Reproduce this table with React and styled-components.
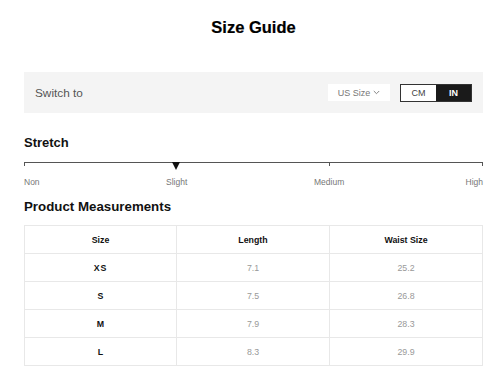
import React from 'react';
import styled, { createGlobalStyle } from 'styled-components';

const GlobalStyle = createGlobalStyle`
  body {
    margin: 0;
    background: #fff;
    font-family: "Liberation Sans", Arial, sans-serif;
  }
`;

const Page = styled.div`
  width: 459px;
  padding: 0 17px 0 24px;
`;

const Title = styled.h1`
  margin: 0;
  padding-top: 17px;
  height: 54px;
  box-sizing: border-box;
  line-height: 20px;
  font-size: 16.5px;
  font-weight: 700;
  color: #000;
  text-align: center;
  -webkit-text-stroke: 0.2px #000;
`;

const SwitchBar = styled.div`
  margin-top: 18px;
  height: 41px;
  background: #f4f4f4;
  display: flex;
  align-items: center;
  padding: 0 11px;
`;

const SwitchLabel = styled.span`
  flex: 1;
  font-size: 11.8px;
  color: #555;
`;

const Dropdown = styled.div`
  width: 62px;
  height: 17px;
  background: #fff;
  display: flex;
  align-items: center;
  justify-content: center;
  gap: 3px;
  font-size: 9px;
  color: #777;
  margin-right: 10px;
`;

const Toggle = styled.div`
  display: flex;
  border: 1px solid #333;
  height: 16px;
`;

const ToggleOption = styled.div`
  width: 35px;
  display: flex;
  align-items: center;
  justify-content: center;
  font-size: 9px;
  font-weight: ${p => (p.active ? 700 : 400)};
  background: ${p => (p.active ? '#1a1a1a' : '#fff')};
  color: ${p => (p.active ? '#fff' : '#444')};
`;

const Heading = styled.h2`
  margin: 0;
  font-size: ${p => p.size || 13}px;
  line-height: 16px;
  font-weight: 700;
  color: #111;
  margin-top: ${p => p.top}px;
`;

const Scale = styled.div`
  position: relative;
  margin-top: 11px;
  height: 4px;
  border-top: 1px solid #555;
`;

const Tick = styled.span`
  position: absolute;
  top: -1px;
  left: ${p => p.left};
  width: 1px;
  height: 4px;
  background: #555;
`;

const Marker = styled.span`
  position: absolute;
  top: -1px;
  left: 148px;
  width: 0;
  height: 0;
  border-left: 4.5px solid transparent;
  border-right: 4.5px solid transparent;
  border-top: 8px solid #111;
`;

const ScaleLabels = styled.div`
  display: flex;
  margin-top: 10px;
  font-size: 8.5px;
  line-height: 11px;
  color: #777;
`;

const ScaleLabel = styled.span`
  width: ${p => p.w}px;
  text-align: ${p => p.align || 'left'};
`;

const Table = styled.div`
  margin-top: 10px;
  display: grid;
  grid-template-columns: 152px 153px 1fr;
  border: 1px solid #e8e8e8;
  border-right: none;
  border-bottom: none;
`;

const Cell = styled.div`
  height: 27px;
  display: flex;
  align-items: center;
  justify-content: center;
  border-right: 1px solid #e8e8e8;
  border-bottom: 1px solid #e8e8e8;
  font-size: 8.8px;
  font-weight: ${p => (p.bold ? 700 : 400)};
  color: ${p => (p.bold ? '#111' : '#999')};
  letter-spacing: ${p => (p.spaced ? '1px' : '0')};
`;

const rows = [
  ['XS', '7.1', '25.2'],
  ['S', '7.5', '26.8'],
  ['M', '7.9', '28.3'],
  ['L', '8.3', '29.9'],
];

const Chevron = () => (
  <svg width="7" height="5" viewBox="0 0 7 5" fill="none" stroke="#777" strokeWidth="0.9">
    <path d="M0.8 1l2.7 2.7L6.2 1" />
  </svg>
);

const App = () => (
  <Page>
    <GlobalStyle />
    <Title>Size Guide</Title>
    <SwitchBar>
      <SwitchLabel>Switch to</SwitchLabel>
      <Dropdown>
        US Size <Chevron />
      </Dropdown>
      <Toggle>
        <ToggleOption>CM</ToggleOption>
        <ToggleOption active>IN</ToggleOption>
      </Toggle>
    </SwitchBar>

    <Heading top={22}>Stretch</Heading>
    <Scale>
      <Tick left="0" />
      <Tick left="305px" />
      <Tick left="calc(100% - 1px)" />
      <Marker />
    </Scale>
    <ScaleLabels>
      <ScaleLabel w={142}>Non</ScaleLabel>
      <ScaleLabel w={148}>Slight</ScaleLabel>
      <ScaleLabel w={100}>Medium</ScaleLabel>
      <ScaleLabel w={69} align="right">High</ScaleLabel>
    </ScaleLabels>

    <Heading top={11} size={13.3}>Product Measurements</Heading>
    <Table>
      <Cell bold>Size</Cell>
      <Cell bold>Length</Cell>
      <Cell bold>Waist Size</Cell>
      {rows.map(([size, length, waist]) => (
        <React.Fragment key={size}>
          <Cell bold spaced={size === 'XS'}>{size}</Cell>
          <Cell>{length}</Cell>
          <Cell>{waist}</Cell>
        </React.Fragment>
      ))}
    </Table>
  </Page>
);

export default App;
